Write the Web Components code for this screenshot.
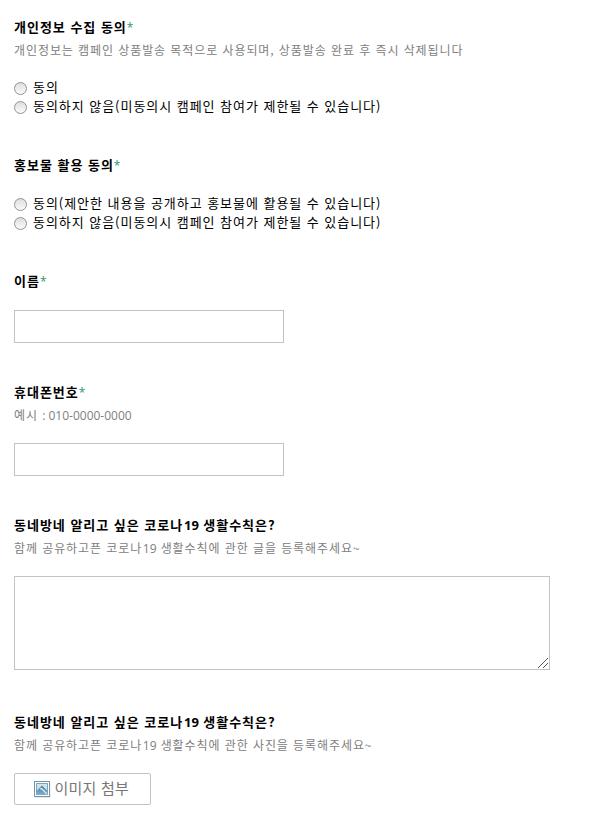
<!DOCTYPE html>
<html lang="ko">
<head>
<meta charset="utf-8">
<title>캠페인 참여</title>
<style>
  body {
    margin: 0;
    background: #fff;
    font-family: "Noto Sans CJK KR", sans-serif;
  }
</style>
</head>
<body>
<campaign-form>
  <form-field required>
    <span slot="label">개인정보 수집 동의</span>
    <span slot="hint">개인정보는 캠페인 상품발송 목적으로 사용되며, 상품발송 완료 후 즉시 삭제됩니다</span>
    <radio-option name="privacy">동의</radio-option>
    <radio-option name="privacy">동의하지 않음(미동의시 캠페인 참여가 제한될 수 있습니다)</radio-option>
  </form-field>
  <form-field required>
    <span slot="label">홍보물 활용 동의</span>
    <radio-option name="promotion">동의(제안한 내용을 공개하고 홍보물에 활용될 수 있습니다)</radio-option>
    <radio-option name="promotion">동의하지 않음(미동의시 캠페인 참여가 제한될 수 있습니다)</radio-option>
  </form-field>
  <form-field required>
    <span slot="label">이름</span>
    <text-input></text-input>
  </form-field>
  <form-field required>
    <span slot="label">휴대폰번호</span>
    <span slot="hint">예시 <latin-text>: 010-0000-0000</latin-text></span>
    <text-input></text-input>
  </form-field>
  <form-field>
    <span slot="label">동네방네 알리고 싶은 코로나<latin-text joined>19</latin-text> 생활수칙은?</span>
    <span slot="hint">함께 공유하고픈 코로나<latin-text joined>19</latin-text> 생활수칙에 관한 글을 등록해주세요~</span>
    <text-area></text-area>
  </form-field>
  <form-field>
    <span slot="label">동네방네 알리고 싶은 코로나<latin-text joined>19</latin-text> 생활수칙은?</span>
    <span slot="hint">함께 공유하고픈 코로나<latin-text joined>19</latin-text> 생활수칙에 관한 사진을 등록해주세요~</span>
    <attach-button>이미지 첨부</attach-button>
  </form-field>
</campaign-form>

<script>
class CampaignForm extends HTMLElement {
  constructor() {
    super();
    this.attachShadow({ mode: 'open' });
    this.shadowRoot.innerHTML = `
      <style>
        :host {
          display: flex;
          flex-direction: column;
          gap: 40px;
          padding: 18px 14px 20px;
        }
      </style>
      <slot></slot>
    `;
  }
}

class FormField extends HTMLElement {
  constructor() {
    super();
    this.attachShadow({ mode: 'open' });
  }

  connectedCallback() {
    const hasHint = this.querySelector('[slot="hint"]') !== null;
    this.shadowRoot.innerHTML = `
      <style>
        :host { display: block; }
        .label {
          font-size: 13px;
          font-weight: 700;
          line-height: 17px;
          height: 19px;
          letter-spacing: 0.98px;
          color: #000;
          white-space: nowrap;
        }
        .star {
          font-family: "Open Sans", sans-serif;
          font-size: 12px;
          font-weight: 400;
          letter-spacing: 0;
          color: #2f9470;
        }
        .hint {
          margin-top: 2px;
          font-size: 12px;
          line-height: 22px;
          height: 22px;
          letter-spacing: 0.92px;
          color: #808080;
          white-space: nowrap;
        }
        .control { margin-top: ${hasHint ? 17 : 19}px; }
      </style>
      <div class="label"><slot name="label"></slot>${this.hasAttribute('required') ? '<span class="star">*</span>' : ''}</div>
      ${hasHint ? '<div class="hint"><slot name="hint"></slot></div>' : ''}
      <div class="control"><slot></slot></div>
    `;
  }
}

// Digits keep their natural width inside the spaced Korean text
class LatinText extends HTMLElement {
  constructor() {
    super();
    this.attachShadow({ mode: 'open' });
    this.shadowRoot.innerHTML = `
      <style>
        :host {
          font-family: "Open Sans", sans-serif;
          letter-spacing: 0;
        }
        :host([joined]) { margin: 0 1px 0 -2.5px; }
      </style>
      <slot></slot>
    `;
  }
}

class RadioOption extends HTMLElement {
  constructor() {
    super();
    this.attachShadow({ mode: 'open' });
    this.shadowRoot.innerHTML = `
      <style>
        :host { display: block; }
        label {
          display: flex;
          align-items: center;
          gap: 6px;
          height: 19px;
          font-size: 13px;
          line-height: 17px;
          letter-spacing: 0.96px;
          color: #000;
          white-space: nowrap;
        }
        label span { margin-bottom: 2px; }
        input {
          appearance: none;
          flex: none;
          box-sizing: border-box;
          width: 13px;
          height: 13px;
          margin: 2px 0 0;
          border: 1px solid #929292;
          border-radius: 50%;
          background: linear-gradient(#dedede, #fbfbfb);
        }
        input:checked {
          background: radial-gradient(circle, #444 0 3px, #f2f2f2 3.5px);
        }
      </style>
      <label><input type="radio"><span><slot></slot></span></label>
    `;
    this.input = this.shadowRoot.querySelector('input');
  }

  connectedCallback() {
    // each input sits in its own shadow root, so the group is cleared by hand
    this.input.addEventListener('change', () => {
      const name = this.getAttribute('name');
      document.querySelectorAll(`radio-option[name="${name}"]`).forEach((option) => {
        if (option !== this) option.input.checked = false;
      });
    });
  }
}

class TextInput extends HTMLElement {
  constructor() {
    super();
    this.attachShadow({ mode: 'open' });
    this.shadowRoot.innerHTML = `
      <style>
        :host { display: block; }
        input {
          display: block;
          box-sizing: border-box;
          width: 270px;
          height: 33px;
          padding: 0 8px;
          border: 1px solid #c3c3c3;
          background: #fff;
          font: inherit;
          font-size: 13px;
        }
      </style>
      <input type="text">
    `;
  }
}

class TextArea extends HTMLElement {
  constructor() {
    super();
    this.attachShadow({ mode: 'open' });
    this.shadowRoot.innerHTML = `
      <style>
        :host {
          display: block;
          position: relative;
          width: 536px;
          padding-bottom: 3px;
        }
        textarea {
          display: block;
          box-sizing: border-box;
          width: 536px;
          height: 94px;
          padding: 8px;
          border: 1px solid #c3c3c3;
          background: #fff;
          font: inherit;
          font-size: 13px;
          resize: none;
        }
        svg {
          position: absolute;
          right: 2px;
          bottom: 5px;
          pointer-events: none;
        }
      </style>
      <textarea></textarea>
      <svg width="10" height="10" shape-rendering="crispEdges">
        <path d="M0 9h1v1h-1zM1 8h1v1h-1zM2 7h1v1h-1zM3 6h1v1h-1zM4 5h1v1h-1zM5 4h1v1h-1zM6 3h1v1h-1zM7 2h1v1h-1zM8 1h1v1h-1zM9 0h1v1h-1zM5 9h1v1h-1zM6 8h1v1h-1zM7 7h1v1h-1zM8 6h1v1h-1zM9 5h1v1h-1z" fill="#555"/>
      </svg>
    `;
  }
}

class AttachButton extends HTMLElement {
  constructor() {
    super();
    this.attachShadow({ mode: 'open' });
    this.shadowRoot.innerHTML = `
      <style>
        :host { display: block; }
        button {
          display: flex;
          align-items: center;
          gap: 3.5px;
          box-sizing: border-box;
          width: 137px;
          height: 32px;
          padding: 0 0 0 19px;
          border: 1px solid #c3c3c3;
          border-radius: 2px;
          background: #fff;
          font-family: inherit;
          font-size: 15px;
          line-height: 28px;
          letter-spacing: 0.2px;
          color: #777;
          white-space: nowrap;
        }
        button span { margin-bottom: 2px; }
        svg { flex: none; }
      </style>
      <button type="button">
        <svg width="17" height="17" viewBox="0 0 17 17">
          <defs>
            <linearGradient id="sky" x2="0" y2="1">
              <stop offset="0" stop-color="#d3e5ee"/>
              <stop offset="1" stop-color="#c4dce8"/>
            </linearGradient>
            <linearGradient id="hill" x2="0" y2="1">
              <stop offset="0" stop-color="#4a80a2"/>
              <stop offset="1" stop-color="#7fb0cb"/>
            </linearGradient>
          </defs>
          <path d="M1 16.5h16v-15" fill="none" stroke="#e7e7e7"/>
          <rect x=".5" y=".5" width="15" height="15" fill="#fff" stroke="#7094aa"/>
          <rect x="2" y="2" width="12" height="12" fill="url(#sky)"/>
          <path d="M2 10.5L8 4.5L14 10.5V14H2z" fill="url(#hill)"/>
          <path d="M6 8l1.5-.5L13 13" fill="none" stroke="#e2edf3" stroke-width="1.1"/>
          <path d="M2.5 14V2.5H13.5V14" fill="none" stroke="#7aa5bd"/>
        </svg>
        <span><slot></slot></span>
      </button>
    `;
  }
}

customElements.define('campaign-form', CampaignForm);
customElements.define('form-field', FormField);
customElements.define('latin-text', LatinText);
customElements.define('radio-option', RadioOption);
customElements.define('text-input', TextInput);
customElements.define('text-area', TextArea);
customElements.define('attach-button', AttachButton);
</script>
</body>
</html>
